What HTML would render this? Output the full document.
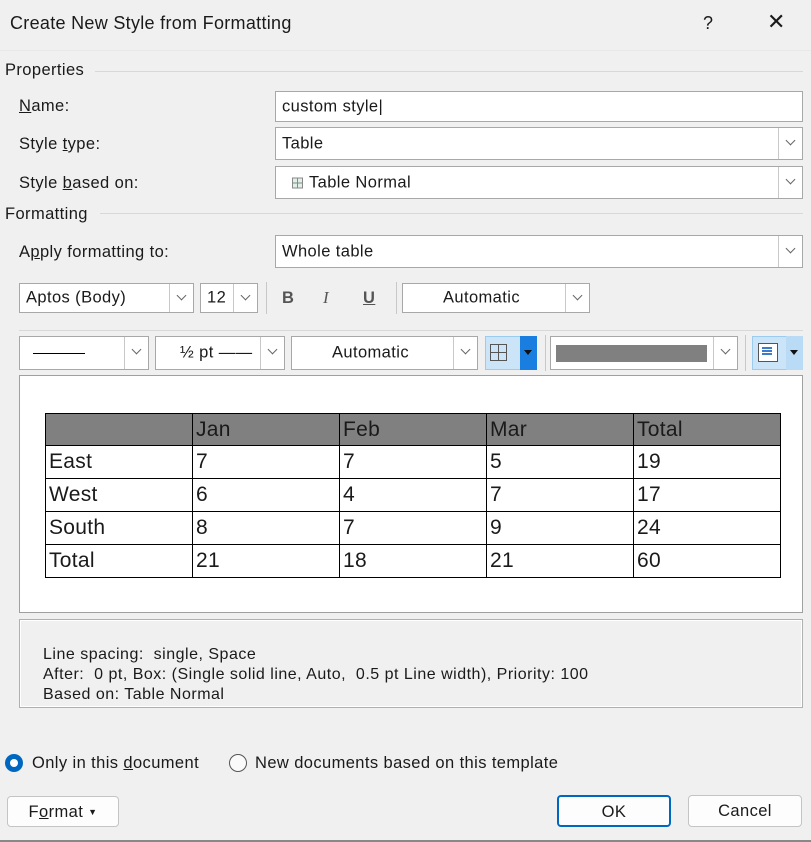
<!DOCTYPE html>
<html><head><style>
*{margin:0;padding:0;box-sizing:border-box}
body{width:811px;height:842px;background:#f0f0f0;font-family:"Liberation Sans",sans-serif;font-size:16.5px;letter-spacing:0.4px;color:#1a1a1a;position:relative;overflow:hidden}
.a{position:absolute;white-space:nowrap}
.box{position:absolute;background:#fff;border:1px solid #a8a8a8}
.box span{position:absolute;left:6px;top:50%;transform:translateY(-50%);white-space:nowrap}
.dd{position:absolute;right:0;top:0;bottom:0;width:24px;border-left:1px solid #c8c8c8;background:#fff}
.dd:after{content:"";position:absolute;left:8px;top:28%;width:6px;height:6px;border-right:1px solid #666;border-bottom:1px solid #666;transform:rotate(45deg)}
.line{position:absolute;height:1px;background:#d8d8d8}
table{position:absolute;left:45px;top:413px;border-collapse:collapse;font-size:21px;letter-spacing:0.3px}
td{border:1.5px solid #000;width:147px;height:33px;padding:0 3px;vertical-align:middle}
tr.h td{background:#808080;height:32px}
.btn{position:absolute;background:#fdfdfd;border:1px solid #c4c4c4;border-radius:4px;text-align:center;line-height:30px}
</style></head><body>
<div class="a" style="left:10px;top:13px;font-size:18px;letter-spacing:0.3px">Create New Style from Formatting</div>
<div class="a" style="left:703px;top:13px;font-size:18px">?</div>
<div class="a" style="left:767px;top:9px;font-size:22px;font-weight:300">✕</div>
<div style="position:absolute;left:0;top:50px;width:811px;height:1px;background:#e8e8e8"></div>

<div class="a" style="left:5px;top:61px">Properties</div><div class="line" style="left:95px;right:8px;top:71px"></div>
<div class="a" style="left:19px;top:97px"><u>N</u>ame:</div>
<div class="box" style="left:275px;top:91px;width:528px;height:31px"><span>custom style|</span></div>
<div class="a" style="left:19px;top:135px">Style <u>t</u>ype:</div>
<div class="box" style="left:275px;top:127px;width:528px;height:33px"><span>Table</span><div class="dd"></div></div>
<div class="a" style="left:19px;top:174px">Style <u>b</u>ased on:</div>
<div class="box" style="left:275px;top:166px;width:528px;height:33px"><span><span style="position:static;display:inline-block;width:11px;height:11px;border:1px solid #888;background:linear-gradient(#888,#888) 4px 0/1px 100% no-repeat,linear-gradient(#888,#888) 0 4px/100% 1px no-repeat,#dff0e8;margin:0 6px 0 10px;vertical-align:-1px;transform:none"></span>Table Normal</span><div class="dd"></div></div>

<div class="a" style="left:5px;top:205px">Formatting</div><div class="line" style="left:100px;right:8px;top:213px"></div>
<div class="a" style="left:19px;top:243px">A<u>p</u>ply formatting to:</div>
<div class="box" style="left:275px;top:235px;width:528px;height:33px"><span>Whole table</span><div class="dd"></div></div>

<div class="box" style="left:19px;top:283px;width:175px;height:30px"><span>Aptos (Body)</span><div class="dd"></div></div>
<div class="box" style="left:200px;top:283px;width:58px;height:30px"><span>12</span><div class="dd"></div></div>
<div style="position:absolute;left:266px;top:282px;width:1px;height:32px;background:#c8c8c8"></div>
<div class="a" style="left:282px;top:289px;font-weight:bold;color:#555">B</div>
<div class="a" style="left:323px;top:288px;font-style:italic;font-family:'Liberation Serif',serif;font-size:17px;color:#555">I</div>
<div class="a" style="left:363px;top:289px;font-weight:bold;text-decoration:underline;color:#555">U</div>
<div style="position:absolute;left:396px;top:282px;width:1px;height:32px;background:#c8c8c8"></div>
<div class="box" style="left:402px;top:283px;width:188px;height:30px"><span style="left:40px">Automatic</span><div class="dd"></div></div>
<div class="line" style="left:19px;right:8px;top:330px"></div>

<div class="box" style="left:19px;top:336px;width:130px;height:34px"><div style="position:absolute;left:13px;top:16px;width:52px;height:1px;background:#000"></div><div class="dd"></div></div>
<div class="box" style="left:155px;top:336px;width:130px;height:34px"><span style="left:24px">½ pt ——</span><div class="dd"></div></div>
<div class="box" style="left:291px;top:336px;width:187px;height:34px"><span style="left:40px">Automatic</span><div class="dd"></div></div>
<div style="position:absolute;left:485px;top:336px;width:52px;height:34px;background:#cce4f7;border:1px solid #9ccbf0"></div>
<div style="position:absolute;left:490px;top:344px;width:17px;height:17px;border:1px solid #555;background:linear-gradient(#555,#555) 7px 0/1px 100% no-repeat,linear-gradient(#555,#555) 0 7px/100% 1px no-repeat"></div>
<div style="position:absolute;left:520px;top:336px;width:17px;height:34px;background:#1a7ee0"></div>
<div style="position:absolute;left:524px;top:350px;border:4px solid transparent;border-top:5px solid #111"></div>
<div style="position:absolute;left:545px;top:335px;width:1px;height:36px;background:#c8c8c8"></div>
<div class="box" style="left:550px;top:336px;width:188px;height:34px"><div style="position:absolute;left:5px;top:8px;width:151px;height:17px;background:#808080"></div><div class="dd"></div></div>
<div style="position:absolute;left:745px;top:335px;width:1px;height:36px;background:#c8c8c8"></div>
<div style="position:absolute;left:752px;top:336px;width:51px;height:34px;background:#cce4f7;border:1px solid #9ccbf0"></div>
<div style="position:absolute;left:758px;top:343px;width:20px;height:19px;border:1px solid #555;background:#fff"></div>
<div style="position:absolute;left:762px;top:347px;width:10px;height:2px;background:#3d7cc9;box-shadow:0 3px 0 #3d7cc9,0 6px 0 #3d7cc9"></div>
<div style="position:absolute;left:786px;top:336px;width:17px;height:34px;background:#b9dbf5"></div>
<div style="position:absolute;left:790px;top:350px;border:4px solid transparent;border-top:5px solid #111"></div>

<div style="position:absolute;left:19px;top:375px;width:784px;height:238px;background:#fff;border:1px solid #a0a0a0"></div>
<table>
<tr class="h"><td></td><td>Jan</td><td>Feb</td><td>Mar</td><td>Total</td></tr>
<tr><td>East</td><td>7</td><td>7</td><td>5</td><td>19</td></tr>
<tr><td>West</td><td>6</td><td>4</td><td>7</td><td>17</td></tr>
<tr><td>South</td><td>8</td><td>7</td><td>9</td><td>24</td></tr>
<tr><td>Total</td><td>21</td><td>18</td><td>21</td><td>60</td></tr>
</table>

<div style="position:absolute;left:19px;top:619px;width:784px;height:89px;border:1px solid #b0b0b0;box-shadow:inset 0 0 0 1px #fff"></div>
<div class="a" style="left:43px;top:645px;font-size:16px;letter-spacing:0.5px;line-height:20px">Line spacing:&nbsp; single, Space<br>After:&nbsp; 0 pt, Box: (Single solid line, Auto,&nbsp; 0.5 pt Line width), Priority: 100<br>Based on: Table Normal</div>

<div style="position:absolute;left:5px;top:754px;width:18px;height:18px;border-radius:50%;background:#0067c0"></div>
<div style="position:absolute;left:10px;top:759px;width:8px;height:8px;border-radius:50%;background:#fff"></div>
<div class="a" style="left:32px;top:754px">Only in this <u>d</u>ocument</div>
<div style="position:absolute;left:229px;top:754px;width:18px;height:18px;border-radius:50%;border:1px solid #555;background:#fafafa"></div>
<div class="a" style="left:255px;top:754px">New documents based on this template</div>

<div class="btn" style="left:7px;top:796px;width:112px;height:31px">F<u>o</u>rmat <span style="font-size:9px;vertical-align:2px">▼</span></div>
<div class="btn" style="left:557px;top:795px;width:114px;height:32px;border:2px solid #0067c0">OK</div>
<div class="btn" style="left:688px;top:795px;width:114px;height:32px">Cancel</div>
<div style="position:absolute;left:0;top:840px;width:811px;height:2px;background:#888"></div>
</body></html>
